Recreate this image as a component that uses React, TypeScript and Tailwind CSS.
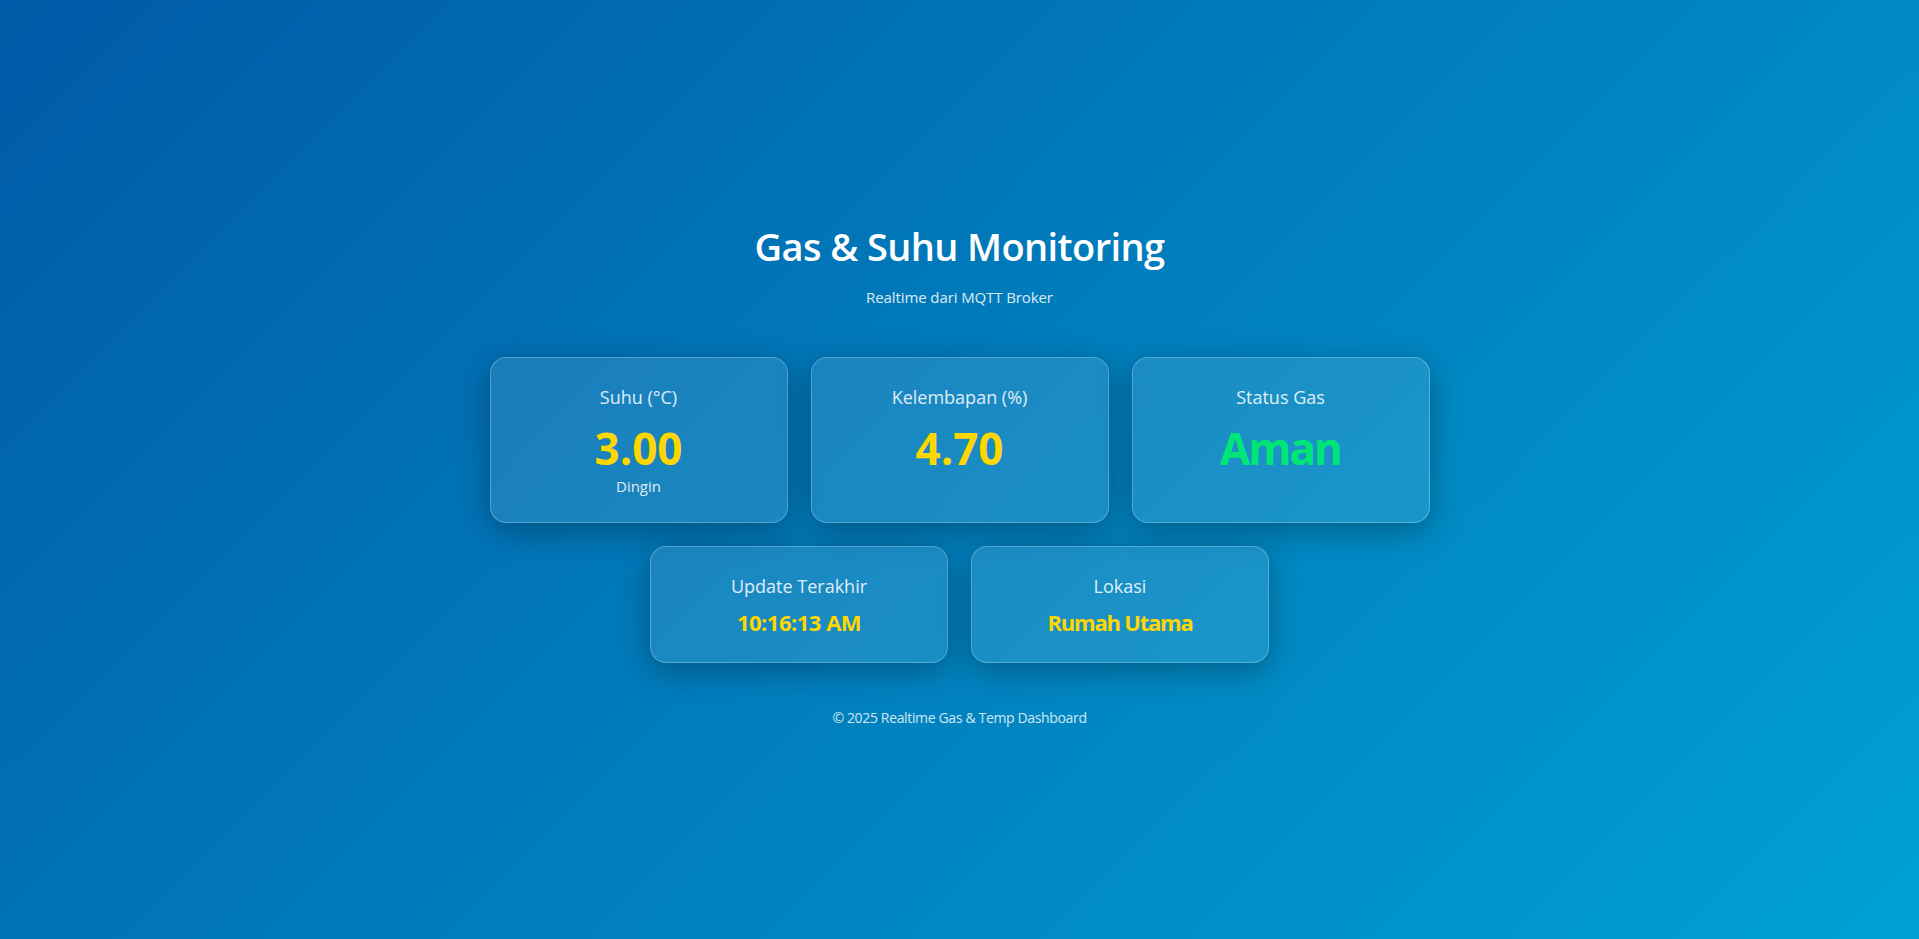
const card =
  "w-[298px] rounded-[16px] border border-white/25 bg-white/10 shadow-[0_8px_32px_rgba(0,0,0,0.3)] flex flex-col items-center pt-[26px]";

export default function App() {
  return (
    <div
      className="min-h-screen w-full flex flex-col items-center justify-center pt-[12px] text-white bg-[linear-gradient(135deg,#005aa7_0%,#00a1d2_100%)]"
      style={{ fontFamily: '"Open Sans", "Noto Sans", sans-serif' }}
    >
      <h1 className="text-[38px] leading-[44px] font-semibold tracking-[-0.6px]">Gas &amp; Suhu Monitoring</h1>
      <p className="mt-[18px] text-[15px] leading-[22px] tracking-[-0.1px] text-white/85">Realtime dari MQTT Broker</p>

      <div className="mt-[49px] flex flex-wrap justify-center gap-[23px] max-w-[940px]">
        <div className={`${card} pb-[25px]`}>
          <div className="text-[18px] leading-[27px] text-white/85">Suhu (°C)</div>
          <div className="mt-[11px] text-[44px] leading-[53px] font-bold text-[#ffd700]">3.00</div>
          <div className="text-[15px] leading-[22px] text-white/85">Dingin</div>
        </div>
        <div className={card}>
          <div className="text-[18px] leading-[27px] text-white/85">Kelembapan (%)</div>
          <div className="mt-[11px] text-[44px] leading-[53px] font-bold text-[#ffd700]">4.70</div>
        </div>
        <div className={card}>
          <div className="text-[18px] leading-[27px] text-white/85">Status Gas</div>
          <div className="mt-[11px] text-[44px] leading-[53px] font-bold tracking-[-2px] text-[#00e676]">Aman</div>
        </div>

        <div className={`${card} pb-[23px]`}>
          <div className="text-[18px] leading-[27px] text-white/85">Update Terakhir</div>
          <div className="mt-[6px] text-[22px] leading-[33px] font-bold tracking-[-0.5px] text-[#ffd700]">10:16:13 AM</div>
        </div>
        <div className={`${card} pb-[23px]`}>
          <div className="text-[18px] leading-[27px] text-white/85">Lokasi</div>
          <div className="mt-[6px] text-[22px] leading-[33px] font-bold tracking-[-1.2px] text-[#ffd700]">Rumah Utama</div>
        </div>
      </div>

      <footer className="mt-[45px] text-[14px] leading-[20px] tracking-[-0.35px] text-white/80">
        © 2025 Realtime Gas &amp; Temp Dashboard
      </footer>
    </div>
  );
}
